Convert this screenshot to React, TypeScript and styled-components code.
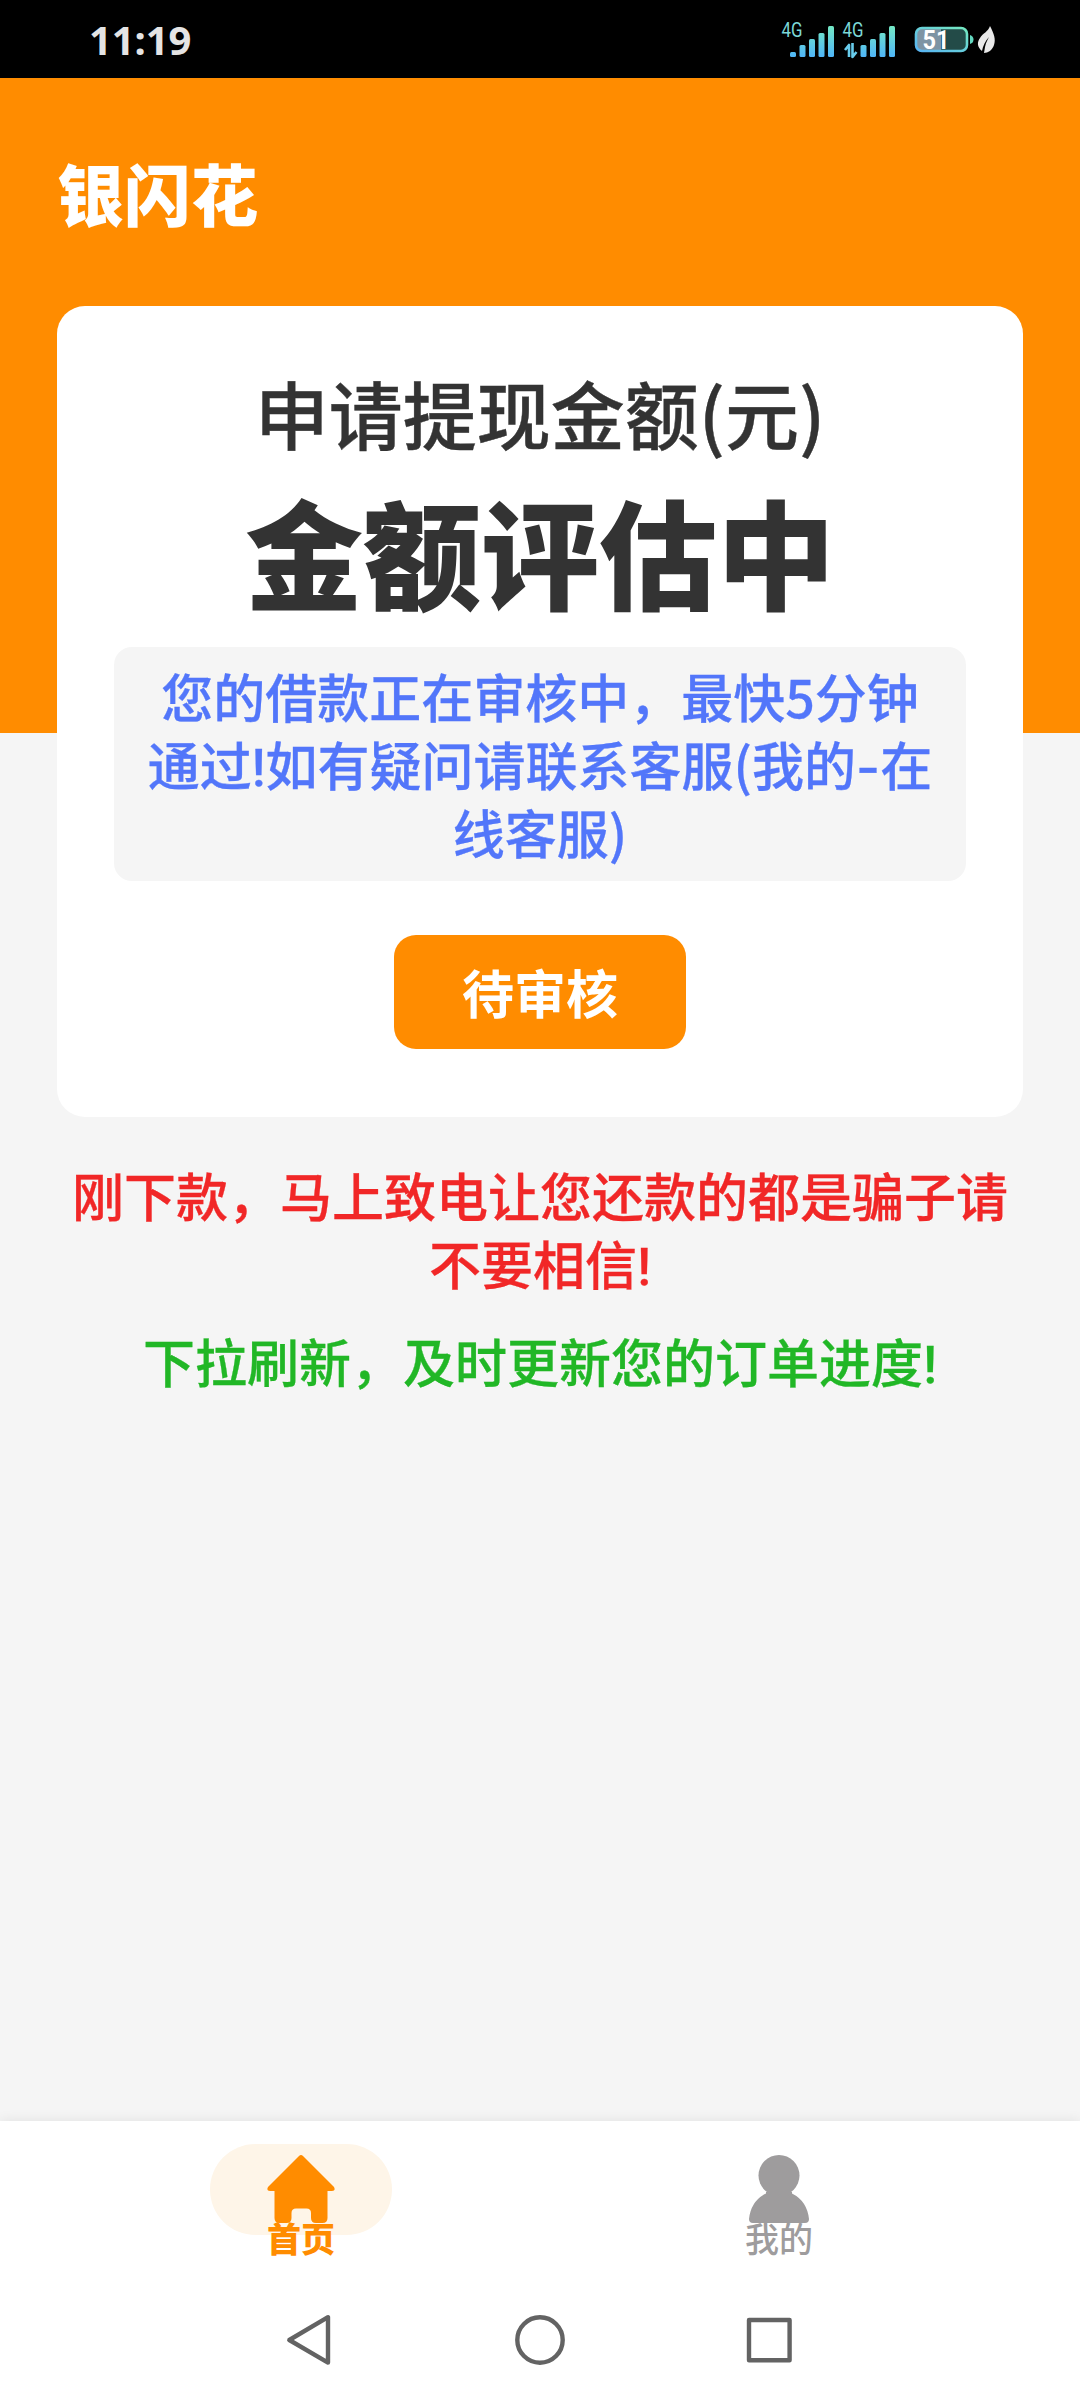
import React from "react";
import styled, { createGlobalStyle } from "styled-components";

const GlobalStyle = createGlobalStyle`
  * { box-sizing: border-box; }
  body {
    margin: 0;
    background: #f5f5f5;
    font-family: "Noto Sans CJK SC", sans-serif;
    color: #333;
  }
`;

const Screen = styled.div`
  width: 1080px;
  height: 2400px;
  display: flex;
  flex-direction: column;
  overflow: hidden;
  background: #f5f5f5;
`;

const StatusBar = styled.header`
  height: 78px;
  flex: none;
  display: flex;
  align-items: center;
  justify-content: space-between;
  padding: 0 82px 0 89px;
  background: #000;
`;

const Clock = styled.span`
  font: 700 40px/78px "Noto Sans", sans-serif;
  color: #e4e4e4;
  letter-spacing: -0.1px;
  padding-top: 2px;
`;

const Main = styled.main`
  flex: 1;
  display: flex;
  flex-direction: column;
  padding: 0 57px;
  background: linear-gradient(#ff8c00 655px, #f5f5f5 655px);
`;

const AppTitle = styled.h1`
  margin: 64px 0 0;
  height: 164px;
  font-size: 67px;
  line-height: 100px;
  font-weight: 900;
  color: #fff;
`;

const Card = styled.section`
  height: 811px;
  flex: none;
  display: flex;
  flex-direction: column;
  align-items: center;
  padding: 58px 57px 0;
  background: #fff;
  border-radius: 28px;
`;

const AmountLabel = styled.div`
  font-size: 74px;
  line-height: 96px;
  font-weight: 500;
  -webkit-text-stroke: 0.4px currentColor;
`;

const Amount = styled.div`
  font-size: 118px;
  line-height: 154px;
  margin: 13px 0 20px;
  font-weight: 900;
`;

const Notice = styled.div`
  width: 852px;
  height: 234px;
  flex: none;
  padding: 15px 24px;
  border-radius: 18px;
  background: #f5f5f5;
  color: #5276fa;
  font-size: 52px;
  line-height: 68px;
  font-weight: 500;
  -webkit-text-stroke: 0.3px currentColor;
  text-align: center;
`;

const Bang = styled.span`
  font-family: Roboto, sans-serif;
  line-height: 1;
`;

const Dash = styled.span`
  font-family: Inter, sans-serif;
  line-height: 1;
`;

const StatusButton = styled.button`
  width: 292px;
  height: 114px;
  margin-top: 54px;
  padding: 0;
  border: 0;
  border-radius: 22px;
  background: #ff8c00;
  color: #fff;
  font: 700 52px/114px "Noto Sans CJK SC", sans-serif;
`;

const Message = styled.p<{ $color: string; $gap: number }>`
  margin: ${(p) => p.$gap}px 0 0;
  color: ${(p) => p.$color};
  font-size: 52px;
  line-height: 68px;
  font-weight: 500;
  -webkit-text-stroke: 0.3px currentColor;
  text-align: center;
`;

const TabBar = styled.nav`
  height: 159px;
  flex: none;
  display: flex;
  padding: 23px 62px 0;
  background: #fff;
  box-shadow: 0 0 12px rgba(0, 0, 0, 0.09);
`;

const Tab = styled.div<{ $active?: boolean }>`
  flex: 1;
  display: flex;
  flex-direction: column;
  align-items: center;
  color: ${(p) => (p.$active ? "#ff8c00" : "#9e9c9d")};
  font-weight: ${(p) => (p.$active ? 900 : 500)};
`;

const TabIcon = styled.div<{ $active?: boolean }>`
  width: 182px;
  height: 91px;
  display: flex;
  justify-content: center;
  padding-top: 11px;
  border-radius: 46px;
  background: ${(p) => (p.$active ? "#fef5e8" : "transparent")};
`;

const TabLabel = styled.span`
  margin-top: -23px;
  font-size: 34px;
  line-height: 52px;
`;

const SystemNav = styled.footer`
  height: 120px;
  flex: none;
  display: flex;
  justify-content: center;
  gap: 169px;
  background: #fff;
`;

const StatusIcons = () => (
  <svg width="225" height="78" viewBox="773 0 225 78">
    <defs>
      <linearGradient id="signal" gradientUnits="userSpaceOnUse" x1="0" y1="26" x2="0" y2="58">
        <stop offset="0" stopColor="#74e8c4" />
        <stop offset="1" stopColor="#4eb4fa" />
      </linearGradient>
      <linearGradient id="shell" x1="0" y1="1" x2="1" y2="0">
        <stop offset="0" stopColor="#58b4f4" />
        <stop offset="1" stopColor="#74e8c0" />
      </linearGradient>
    </defs>
    {[0, 61].map((dx) => (
      <g key={dx} transform={`translate(${dx} 0)`} fill="url(#signal)">
        <text x="781.500" y="37" fontFamily="Roboto, sans-serif" fontSize="20" textLength="21" lengthAdjust="spacingAndGlyphs" fill="#7cd8d8">4G</text>
        {dx === 0 && <rect x="790" y="52" width="6" height="5" rx="1.5" />}
        <rect x="799.5" y="45" width="6" height="12" rx="1.5" />
        <rect x="809" y="39" width="6" height="18" rx="1.5" />
        <rect x="818.5" y="33" width="6" height="24" rx="1.5" />
        <rect x="828" y="26" width="6" height="31" rx="1.5" />
      </g>
    ))}
    <path d="M845 50l4-5v12M852.500 43v14l4-5" fill="none" stroke="#68ccec" strokeWidth="2.600" strokeLinejoin="round" />
    <rect x="916" y="28" width="51" height="23" rx="6" fill="#234b48" />
    <path d="M922 28h19v23h-19a6 6 0 0 1-6-6V34a6 6 0 0 1 6-6z" fill="#7e94a4" />
    <rect x="916" y="28" width="51" height="23" rx="6" fill="none" stroke="url(#shell)" strokeWidth="2.600" />
    <path d="M970 35q3.500 1 3.500 4.500t-3.500 4.500z" fill="#63d8c0" />
    <text x="922.500" y="48.500" fontFamily="Roboto, sans-serif" fontWeight="700" fontSize="25" textLength="27" lengthAdjust="spacingAndGlyphs" fill="#fff">51</text>
    <path d="M990 26c4 8 6 13 4 19-1.500 5-6 8-10 8l1-6c1-5 3-8 4-10-4 4-6 9-7 14-5-4-5-9-2-13 3-5 8-6 10-12z" fill="#e9e9e9" />
  </svg>
);

const HomeIcon = () => (
  <svg width="68" height="68" viewBox="0 0 68 68" fill="currentColor">
    <path d="M32 1Q34-1 36 1L67 32Q69 36 65 36H60.500V63Q60.500 68 55.500 68H49Q44 68 44 63V58Q44 53.500 39.500 53.500H29Q24.500 53.500 24.500 58V63Q24.500 68 19.500 68H12.500Q7.500 68 7.500 63V36H3Q-1 36 1 32Z" />
  </svg>
);

const PersonIcon = () => (
  <svg width="60" height="68" viewBox="0 0 60 68" fill="currentColor">
    <circle cx="30" cy="20.500" r="20.500" />
    <path d="M17 37H43V38.500Q58 46 60 64Q60 68 56 68H4Q0 68 0 64Q2 46 17 38.500Z" />
  </svg>
);

const NavIcon = ({ children }: { children: React.ReactNode }) => (
  <svg width="60" height="120" viewBox="0 0 60 120" fill="none" stroke="#636363" strokeWidth="4.400" strokeLinejoin="round">
    {children}
  </svg>
);

export default function App() {
  return (
    <>
      <GlobalStyle />
      <Screen>
        <StatusBar>
          <Clock>11:19</Clock>
          <StatusIcons />
        </StatusBar>
        <Main>
          <AppTitle>银闪花</AppTitle>
          <Card>
            <AmountLabel>申请提现金额(元)</AmountLabel>
            <Amount>金额评估中</Amount>
            <Notice>
              您的借款正在审核中，最快5分钟
              <br />
              通过<Bang>!</Bang>如有疑问请联系客服(我的<Dash>-</Dash>在
              <br />
              线客服)
            </Notice>
            <StatusButton>待审核</StatusButton>
          </Card>
          <Message $color="#f12727" $gap={44}>
            刚下款，马上致电让您还款的都是骗子请不要相信<Bang>!</Bang>
          </Message>
          <Message $color="#21b726" $gap={30}>
            下拉刷新，及时更新您的订单进度<Bang>!</Bang>
          </Message>
        </Main>
        <TabBar>
          <Tab $active>
            <TabIcon $active>
              <HomeIcon />
            </TabIcon>
            <TabLabel>首页</TabLabel>
          </Tab>
          <Tab>
            <TabIcon>
              <PersonIcon />
            </TabIcon>
            <TabLabel>我的</TabLabel>
          </Tab>
        </TabBar>
        <SystemNav>
          <NavIcon>
            <path d="M8.300 60L47 37.200V82.600Z" />
          </NavIcon>
          <NavIcon>
            <circle cx="30" cy="60" r="22.700" />
          </NavIcon>
          <NavIcon>
            <rect x="10" y="40" width="40.600" height="40.200" />
          </NavIcon>
        </SystemNav>
      </Screen>
    </>
  );
}
